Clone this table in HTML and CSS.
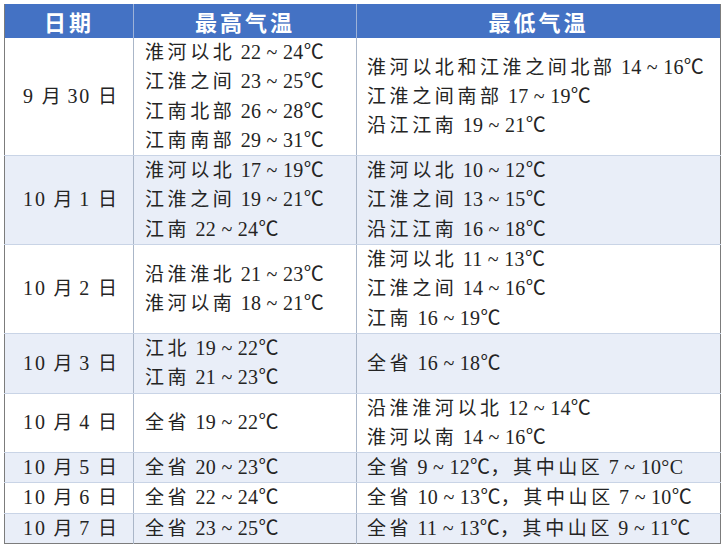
FILE: index.html
```html
<!DOCTYPE html>
<html lang="zh-CN">
<head>
<meta charset="utf-8">
<link rel="stylesheet" href="styles.css">
</head>
<body>
<table class="wx">
  <colgroup><col class="c1"><col class="c2"><col class="c3"></colgroup>
  <thead>
    <tr><th>日期</th><th>最高气温</th><th>最低气温</th></tr>
  </thead>
  <tbody>
    <tr>
      <td class="d">9 <span class="z">月</span> 30 <span class="z">日</span></td>
      <td><span class="z">淮河以北</span> 22 ~ 24℃<br><span class="z">江淮之间</span> 23 ~ 25℃<br><span class="z">江南北部</span> 26 ~ 28℃<br><span class="z">江南南部</span> 29 ~ 31℃</td>
      <td><span class="z">淮河以北和江淮之间北部</span> 14 ~ 16℃<br><span class="z">江淮之间南部</span> 17 ~ 19℃<br><span class="z">沿江江南</span> 19 ~ 21℃</td>
    </tr>
    <tr class="alt">
      <td class="d">10 <span class="z">月</span> 1 <span class="z">日</span></td>
      <td><span class="z">淮河以北</span> 17 ~ 19℃<br><span class="z">江淮之间</span> 19 ~ 21℃<br><span class="z">江南</span> 22 ~ 24℃</td>
      <td><span class="z">淮河以北</span> 10 ~ 12℃<br><span class="z">江淮之间</span> 13 ~ 15℃<br><span class="z">沿江江南</span> 16 ~ 18℃</td>
    </tr>
    <tr>
      <td class="d">10 <span class="z">月</span> 2 <span class="z">日</span></td>
      <td><span class="z">沿淮淮北</span> 21 ~ 23℃<br><span class="z">淮河以南</span> 18 ~ 21℃</td>
      <td><span class="z">淮河以北</span> 11 ~ 13℃<br><span class="z">江淮之间</span> 14 ~ 16℃<br><span class="z">江南</span> 16 ~ 19℃</td>
    </tr>
    <tr class="alt">
      <td class="d">10 <span class="z">月</span> 3 <span class="z">日</span></td>
      <td><span class="z">江北</span> 19 ~ 22℃<br><span class="z">江南</span> 21 ~ 23℃</td>
      <td><span class="z">全省</span> 16 ~ 18℃</td>
    </tr>
    <tr>
      <td class="d">10 <span class="z">月</span> 4 <span class="z">日</span></td>
      <td><span class="z">全省</span> 19 ~ 22℃</td>
      <td><span class="z">沿淮淮河以北</span> 12 ~ 14℃<br><span class="z">淮河以南</span> 14 ~ 16℃</td>
    </tr>
    <tr class="alt">
      <td class="d">10 <span class="z">月</span> 5 <span class="z">日</span></td>
      <td><span class="z">全省</span> 20 ~ 23℃</td>
      <td><span class="z">全省</span> 9 ~ 12℃<span class="z">，其中山区</span> 7 ~ 10°C</td>
    </tr>
    <tr>
      <td class="d">10 <span class="z">月</span> 6 <span class="z">日</span></td>
      <td><span class="z">全省</span> 22 ~ 24℃</td>
      <td><span class="z">全省</span> 10 ~ 13℃<span class="z">，其中山区</span> 7 ~ 10℃</td>
    </tr>
    <tr class="alt last">
      <td class="d">10 <span class="z">月</span> 7 <span class="z">日</span></td>
      <td><span class="z">全省</span> 23 ~ 25℃</td>
      <td><span class="z">全省</span> 11 ~ 13℃<span class="z">，其中山区</span> 9 ~ 11℃</td>
    </tr>
  </tbody>
</table>
</body>
</html>
```
FILE: styles.css
```css
html, body {
  margin: 0;
  padding: 0;
  background: #ffffff;
}
body {
  padding: 4px 0 0 4px;
}
.wx {
  border-collapse: collapse;
  width: 716px;
  table-layout: fixed;
  font-family: "Liberation Serif", "Noto Sans CJK SC", serif;
  color: #242424;
  border-left: 1px solid #7c7c7c;
  border-right: 1px solid #7c7c7c;
  border-bottom: 1px solid #7c7c7c;
}
.c1 { width: 129px; }
.c2 { width: 223px; }
.c3 { width: 364px; }
.wx th {
  background: #4472c4;
  color: #ffffff;
  font-family: "Noto Sans CJK SC", sans-serif;
  font-weight: 700;
  font-size: 22px;
  letter-spacing: 3px;
  height: 34px;
  line-height: 34px;
  padding: 0;
  text-align: center;
  border-left: 1px solid #9db2d8;
}
.wx th:first-child { border-left: none; }
.wx td {
  font-size: 20px;
  letter-spacing: 0.3px;
  line-height: 29.3px;
  padding: 0 0 0 11px;
  vertical-align: middle;
  border-left: 1px solid #aab6c8;
  border-bottom: 1px solid #c9d4e6;
  white-space: nowrap;
}
.wx td:first-child { border-left: none; }
.z {
  font-family: "Noto Sans CJK SC", sans-serif;
  font-size: 19px;
  line-height: 1;
  letter-spacing: 3.6px;
}
.wx td.d {
  text-align: center;
  padding: 0 0 0 2px;
  letter-spacing: 1.8px;
}
.wx td.d .z { letter-spacing: 0; }
.wx td:nth-child(3) { padding-left: 10px; }
.alt td { background: #e9eef8; }
.last td { border-bottom: none; }
```
